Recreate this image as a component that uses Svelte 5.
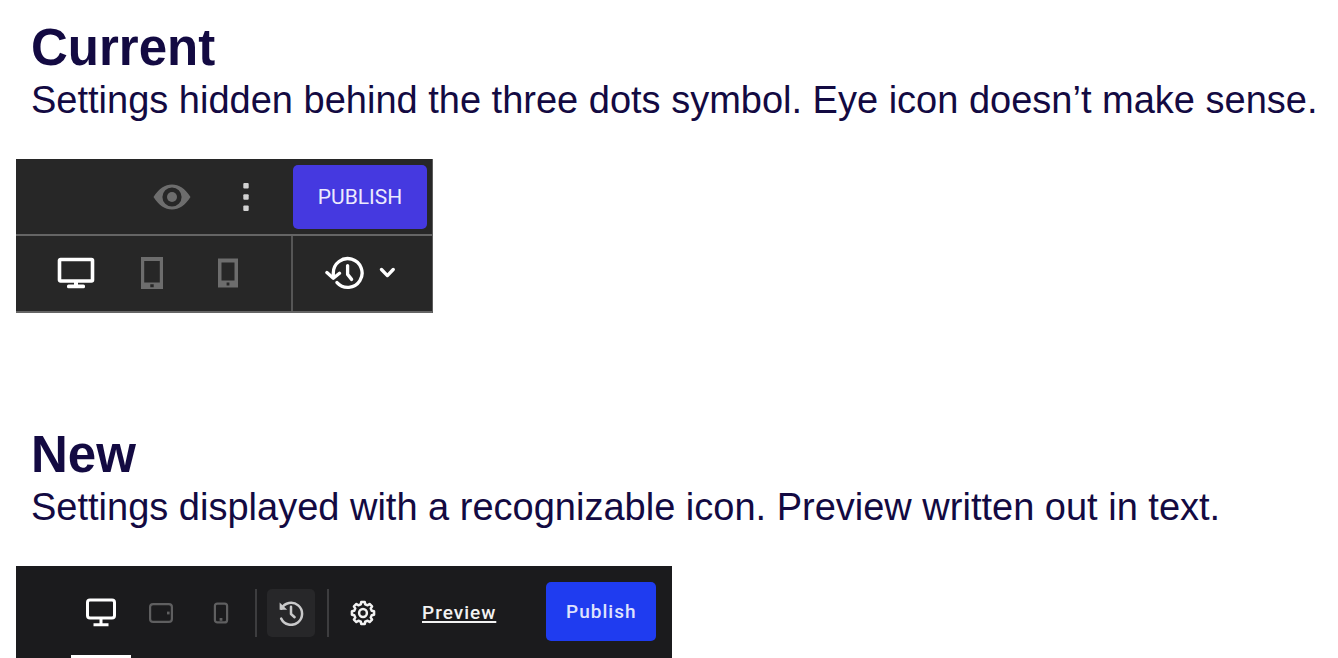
<script lang="ts">
  // Outline of an eight-tooth gear centred on the origin
  function gearPath(teeth: number, outer: number, inner: number) {
    const step = (Math.PI * 2) / teeth;
    const points: string[] = [];
    for (let i = 0; i < teeth; i++) {
      const a = i * step - Math.PI / 2;
      for (const [offset, r] of [[-0.31, inner], [-0.2, outer], [0.2, outer], [0.31, inner]]) {
        const t = a + offset * step;
        points.push(`${(Math.cos(t) * r).toFixed(2)} ${(Math.sin(t) * r).toFixed(2)}`);
      }
    }
    return `M${points.join('L')}Z`;
  }

  const gear = gearPath(8, 11.2, 9);

  let oldDevice = $state('desktop');
  let newDevice = $state('desktop');
</script>

<main>
  <section>
    <h2>Current</h2>
    <p>Settings hidden behind the three dots symbol. Eye icon doesn’t make sense.</p>

    <div class="old-bar">
      <div class="old-row old-top">
        <button class="old-action" aria-label="Preview">
          <svg viewBox="0 0 38 26" width="38" height="26">
            <path fill="#6d6d6d" fill-rule="evenodd" d="M0.5 13C6 4.5 12 0.5 19 0.5S32 4.5 37.5 13C32 21.5 26 25.5 19 25.5S6 21.5 0.5 13ZM19 3.4a9.6 9.6 0 1 0 0 19.2a9.6 9.6 0 1 0 0-19.2Z"/>
            <circle cx="19" cy="13" r="5" fill="#6d6d6d"/>
          </svg>
        </button>
        <button class="old-action" aria-label="More options">
          <svg viewBox="0 0 6 28" width="6" height="28" fill="#d2d2d2">
            <rect x="0.3" y="0" width="5.4" height="5.4" rx="1"/>
            <rect x="0.3" y="11.3" width="5.4" height="5.4" rx="1"/>
            <rect x="0.3" y="22.6" width="5.4" height="5.4" rx="1"/>
          </svg>
        </button>
        <button class="old-publish">PUBLISH</button>
      </div>

      <div class="old-row">
        <div class="old-devices">
          <button class="old-icon" class:on={oldDevice === 'desktop'} aria-label="Desktop" onclick={() => (oldDevice = 'desktop')}>
            <svg viewBox="0 0 38 32" width="38" height="32">
              <rect x="2.5" y="2.5" width="33" height="21.5" rx="1" fill="none" stroke="currentColor" stroke-width="3.6"/>
              <path d="M17 24h4v4h-4z" fill="currentColor"/>
              <rect x="10" y="27.5" width="18" height="3.8" rx="1.5" fill="currentColor"/>
            </svg>
          </button>
          <button class="old-icon" class:on={oldDevice === 'tablet'} aria-label="Tablet" onclick={() => (oldDevice = 'tablet')}>
            <svg viewBox="0 0 24 32" width="24" height="32">
              <path fill="currentColor" fill-rule="evenodd" d="M1 0H23V32H1ZM4.2 4V25.5H19.8V4ZM10.3 27.2V30.2H13.7V27.2Z"/>
            </svg>
          </button>
          <button class="old-icon" class:on={oldDevice === 'phone'} aria-label="Phone" onclick={() => (oldDevice = 'phone')}>
            <svg viewBox="0 0 22 30" width="22" height="30">
              <path fill="currentColor" fill-rule="evenodd" d="M1 0.5H21V29.5H1ZM4.5 4.5V22.5H17.5V4.5ZM9.6 24.6V27.6H12.4V24.6Z"/>
            </svg>
          </button>
        </div>
        <button class="old-history" aria-label="History">
          <svg viewBox="0 0 70 34" width="70" height="34" fill="none" stroke="#fff" stroke-width="3.3" stroke-linecap="round" stroke-linejoin="round">
            <path d="M8.3 21.5V17A14.4 14.4 0 1 1 12 26.6"/>
            <path d="M1.9 16.6L8.3 22.3L14.5 17.2"/>
            <path d="M22.6 9.6V18.4L26.6 23.4"/>
            <path d="M56.5 13.5L62.4 19.6L68.2 13.5"/>
          </svg>
        </button>
      </div>
    </div>
  </section>

  <section>
    <h2>New</h2>
    <p>Settings displayed with a recognizable icon. Preview written out in text.</p>

    <div class="new-bar">
      <div class="new-devices">
        <button class="tab" class:on={newDevice === 'desktop'} aria-label="Desktop" onclick={() => (newDevice = 'desktop')}>
          <svg viewBox="0 0 30 30" width="30" height="30" fill="none" stroke="currentColor" stroke-width="3">
            <rect x="1.5" y="2" width="27" height="18" rx="2.5"/>
            <path d="M15 20v6M7.5 26.7h15"/>
          </svg>
        </button>
        <button class="tab" class:on={newDevice === 'tablet'} aria-label="Tablet" onclick={() => (newDevice = 'tablet')}>
          <svg viewBox="0 0 24 22" width="24" height="22" fill="none" stroke="currentColor" stroke-width="2.2">
            <rect x="1.1" y="2.1" width="21.8" height="17.8" rx="3"/>
            <rect x="18" y="9.6" width="2.6" height="2.8" fill="currentColor" stroke="none"/>
          </svg>
        </button>
        <button class="tab" class:on={newDevice === 'phone'} aria-label="Phone" onclick={() => (newDevice = 'phone')}>
          <svg viewBox="0 0 16 22" width="16" height="22" fill="none" stroke="currentColor" stroke-width="2.2">
            <rect x="1.9" y="1.6" width="12.2" height="18.8" rx="2.5"/>
            <rect x="6.6" y="16" width="2.8" height="2.8" fill="currentColor" stroke="none"/>
          </svg>
        </button>
      </div>
      <div class="boxed">
        <button class="new-history" aria-label="History">
          <svg viewBox="0 0 26 26" width="26" height="26" fill="none" stroke="#c9c9ca" stroke-width="2.5" stroke-linecap="round">
            <path d="M3.4 8.6A11 11 0 1 1 3.2 18.6"/>
            <path d="M1.6 2.4V9.8H9.2Z" fill="#c9c9ca" stroke="none"/>
            <path d="M13 6.8V14L16.6 17.2" stroke-linejoin="round"/>
          </svg>
        </button>
      </div>
      <button class="settings" aria-label="Settings">
        <svg viewBox="-13 -13 26 26" width="26" height="26" fill="none" stroke="#f2f2f2" stroke-width="2.5" stroke-linejoin="round">
          <path d={gear}/>
          <circle r="3.9"/>
        </svg>
      </button>
      <a class="preview" href="#preview">Preview</a>
      <button class="new-publish">Publish</button>
    </div>
  </section>
</main>

<style>
  :global(body) {
    margin: 0;
    background: #fff;
  }

  main {
    display: flex;
    flex-direction: column;
    align-items: flex-start;
    gap: 114px;
    padding: 20px 0 0 16px;
    font-family: "Liberation Sans", Arial, sans-serif;
    color: #130a42;
  }

  h2, p {
    margin: 0 0 0 15px;
  }

  h2 {
    font-size: 51px;
    line-height: 56px;
  }

  p {
    font-size: 38px;
    line-height: 48px;
  }

  button {
    display: flex;
    align-items: center;
    justify-content: center;
    margin: 0;
    padding: 0;
    border: 0;
    background: none;
    font-family: Roboto, sans-serif;
    cursor: pointer;
  }

  svg {
    display: block;
  }

  .old-bar {
    display: inline-block;
    margin-top: 35px;
    vertical-align: top;
    background: #272727;
    border-right: 1px solid #5c5c5c;
  }

  .old-row {
    display: flex;
    height: 75px;
    border-bottom: 2px solid #656565;
  }

  .old-top {
    align-items: center;
    justify-content: flex-end;
    padding-right: 5px;
  }

  .old-action {
    width: 74px;
    height: 75px;
  }

  .old-icon {
    width: 76px;
    padding-bottom: 2px;
    color: #6d6d6d;
  }

  .old-icon.on {
    color: #fff;
  }

  .old-publish {
    width: 134px;
    height: 64px;
    margin-left: 10px;
    border-radius: 5px;
    background: #4539e0;
    color: #eceafd;
    font-size: 21px;
  }

  .old-devices {
    display: flex;
    padding: 0 25px 0 22px;
    border-right: 2px solid #565656;
  }

  .old-history {
    width: 139px;
    padding: 0 6px 2px 0;
  }

  .new-bar {
    display: inline-flex;
    align-items: center;
    box-sizing: border-box;
    margin-top: 35px;
    padding: 2px 16px 0 55px;
    height: 92px;
    vertical-align: top;
    background: #1b1b1d;
  }

  .new-devices {
    display: flex;
    align-self: stretch;
  }

  .tab {
    width: 60px;
    padding-top: 3px;
    border-bottom: 3px solid transparent;
    color: #5f5f60;
  }

  .tab.on {
    border-color: #fff;
    color: #fff;
  }

  .boxed {
    margin-left: 4px;
    padding: 0 12px 0 10px;
    border: solid #3d3d3f;
    border-width: 0 2px;
  }

  .new-history {
    width: 48px;
    height: 48px;
    border-radius: 5px;
    background: #272729;
  }

  .settings {
    width: 68px;
    height: 48px;
  }

  .preview {
    margin-left: 25px;
    font: 500 19px/24px Roboto, sans-serif;
    letter-spacing: 1px;
    color: #f2f2f2;
    text-decoration: underline;
    text-decoration-thickness: 2px;
    text-underline-offset: 2px;
  }

  .new-publish {
    width: 110px;
    height: 59px;
    margin: 0 0 4px 50px;
    border-radius: 5px;
    background: #1f3cf0;
    color: #dfe3fd;
    font-size: 19px;
    font-weight: 500;
    letter-spacing: 1px;
  }
</style>
